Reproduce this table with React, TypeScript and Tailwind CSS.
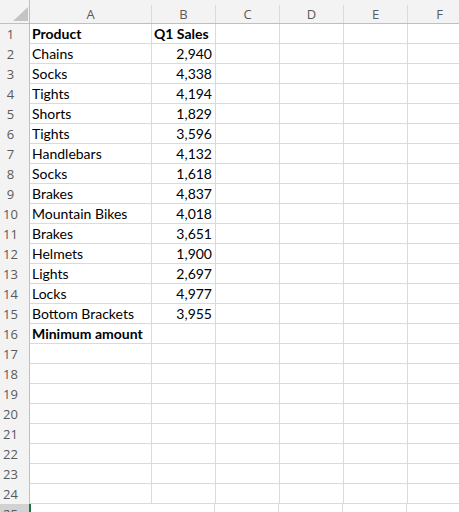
const columns = [
  { key: "A", width: "w-[122px]" },
  { key: "B", width: "w-[64px]" },
  { key: "C", width: "w-[64px]" },
  { key: "D", width: "w-[64px]" },
  { key: "E", width: "w-[64px]" },
  { key: "F", width: "w-[64px]" },
];

type Row = { a?: string; b?: string; bold?: boolean };

const rows: Row[] = [
  { a: "Product", b: "Q1 Sales", bold: true },
  { a: "Chains", b: "2,940" },
  { a: "Socks", b: "4,338" },
  { a: "Tights", b: "4,194" },
  { a: "Shorts", b: "1,829" },
  { a: "Tights", b: "3,596" },
  { a: "Handlebars", b: "4,132" },
  { a: "Socks", b: "1,618" },
  { a: "Brakes", b: "4,837" },
  { a: "Mountain Bikes", b: "4,018" },
  { a: "Brakes", b: "3,651" },
  { a: "Helmets", b: "1,900" },
  { a: "Lights", b: "2,697" },
  { a: "Locks", b: "4,977" },
  { a: "Bottom Brackets", b: "3,955" },
  { a: "Minimum amount", bold: true },
  {}, {}, {}, {}, {}, {}, {}, {},
];

const headFont = "font-['Open_Sans',sans-serif] text-[13px] text-[#5a5a5a]";
const cellFont = "font-['Lato','Noto_Sans',sans-serif] text-[14px] text-black";

export default function App() {
  return (
    <div className="h-[512px] w-[459px] overflow-hidden bg-white">
      {/* column headers */}
      <div className="flex h-[24px] w-max items-end border-b border-[#bfbfbf] bg-[#f3f3f3]">
        <div className="flex h-[23px] w-[30px] shrink-0 items-end justify-end border-r border-[#bfbfbf] pb-[2px] pr-[1px]">
          <svg width="15" height="14" viewBox="0 0 15 14">
            <polygon points="15,0 15,14 0,14" fill="#c4c4c4" />
          </svg>
        </div>
        {columns.map((c) => (
          <div
            key={c.key}
            className={`${c.width} ${headFont} flex h-[18px] shrink-0 items-center justify-center border-r border-[#dadada] leading-none`}
          >
            {c.key}
          </div>
        ))}
      </div>

      {rows.map((r, i) => (
        <div key={i} className="flex h-[20px] w-max">
          <div
            className={`${headFont} flex w-[30px] shrink-0 items-center justify-center border-r border-[#bfbfbf] bg-[#f3f3f3] pr-[8px] leading-[19px]`}
          >
            {i + 1}
          </div>
          <div
            className={`${cellFont} w-[122px] shrink-0 overflow-visible whitespace-nowrap border-b border-r border-[#dadada] pl-[2px] leading-[19px] ${r.bold ? "font-bold" : ""}`}
          >
            {r.a}
          </div>
          <div
            className={`${cellFont} w-[64px] shrink-0 whitespace-nowrap border-b border-r border-[#dadada] pr-[3px] leading-[19px] ${r.bold ? "pl-[2px] text-left font-bold" : "text-right"}`}
          >
            {r.b}
          </div>
          {columns.slice(2).map((c) => (
            <div key={c.key} className={`${c.width} shrink-0 border-b border-r border-[#dadada]`} />
          ))}
        </div>
      ))}

      {/* row 25, partly visible, active cell */}
      <div className="flex h-[20px] w-max">
        <div
          className={`${headFont} flex w-[30px] shrink-0 items-center justify-center border-r border-[#bfbfbf] bg-[#d2d2d2] pr-[8px] leading-[19px]`}
        >
          25
        </div>
        <div className="w-[122px] shrink-0 border-l-2 border-[#217346] -ml-[1px]" />
        <div className="w-[64px] shrink-0 border-r border-[#dadada]" />
        {columns.slice(2).map((c) => (
          <div key={c.key} className={`${c.width} shrink-0 border-r border-[#dadada]`} />
        ))}
      </div>
    </div>
  );
}
